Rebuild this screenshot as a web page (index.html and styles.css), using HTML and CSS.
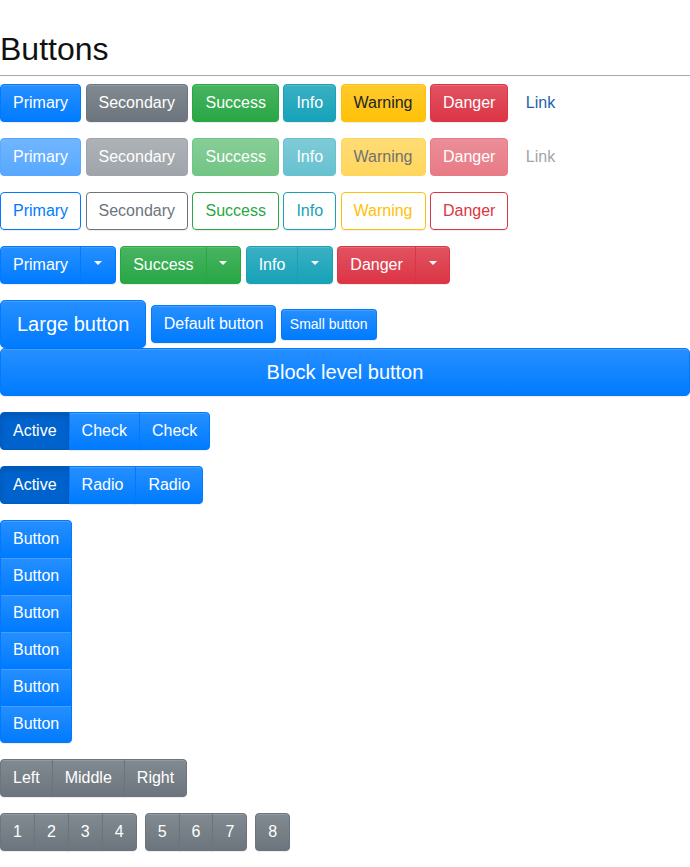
FILE: index.html
```html
<!DOCTYPE html>
<html lang="en">
<head>
<meta charset="utf-8">
<title>Buttons</title>
<link rel="stylesheet" href="styles.css">
</head>
<body>
<h1 class="page-header">Buttons</h1>

<div class="row">
  <button class="btn btn-primary">Primary</button>
  <button class="btn btn-secondary">Secondary</button>
  <button class="btn btn-success">Success</button>
  <button class="btn btn-info">Info</button>
  <button class="btn btn-warning">Warning</button>
  <button class="btn btn-danger">Danger</button>
  <button class="btn btn-link">Link</button>
</div>

<div class="row">
  <button class="btn btn-primary disabled">Primary</button>
  <button class="btn btn-secondary disabled">Secondary</button>
  <button class="btn btn-success disabled">Success</button>
  <button class="btn btn-info disabled">Info</button>
  <button class="btn btn-warning disabled">Warning</button>
  <button class="btn btn-danger disabled">Danger</button>
  <button class="btn btn-link disabled">Link</button>
</div>

<div class="row">
  <button class="btn btn-outline-primary">Primary</button>
  <button class="btn btn-outline-secondary">Secondary</button>
  <button class="btn btn-outline-success">Success</button>
  <button class="btn btn-outline-info">Info</button>
  <button class="btn btn-outline-warning">Warning</button>
  <button class="btn btn-outline-danger">Danger</button>
</div>

<div class="row">
  <div class="btn-group">
    <button class="btn btn-primary">Primary</button>
    <button class="btn btn-primary toggle"><span class="caret"></span></button>
  </div>
  <div class="btn-group">
    <button class="btn btn-success">Success</button>
    <button class="btn btn-success toggle"><span class="caret"></span></button>
  </div>
  <div class="btn-group">
    <button class="btn btn-info">Info</button>
    <button class="btn btn-info toggle"><span class="caret"></span></button>
  </div>
  <div class="btn-group">
    <button class="btn btn-danger">Danger</button>
    <button class="btn btn-danger toggle"><span class="caret"></span></button>
  </div>
</div>

<div class="row row-tight">
  <button class="btn btn-primary btn-lg">Large button</button>
  <button class="btn btn-primary">Default button</button>
  <button class="btn btn-primary btn-sm">Small button</button>
</div>
<button class="btn btn-primary btn-lg btn-block">Block level button</button>

<div class="row">
  <div class="btn-group">
    <button class="btn btn-primary active">Active</button>
    <button class="btn btn-primary">Check</button>
    <button class="btn btn-primary">Check</button>
  </div>
</div>

<div class="row">
  <div class="btn-group">
    <button class="btn btn-primary active">Active</button>
    <button class="btn btn-primary">Radio</button>
    <button class="btn btn-primary">Radio</button>
  </div>
</div>

<div class="row">
  <div class="btn-group-vertical">
    <button class="btn btn-primary">Button</button>
    <button class="btn btn-primary">Button</button>
    <button class="btn btn-primary">Button</button>
    <button class="btn btn-primary">Button</button>
    <button class="btn btn-primary">Button</button>
    <button class="btn btn-primary">Button</button>
  </div>
</div>

<div class="row">
  <div class="btn-group">
    <button class="btn btn-secondary">Left</button>
    <button class="btn btn-secondary">Middle</button>
    <button class="btn btn-secondary">Right</button>
  </div>
</div>

<div class="row toolbar">
  <div class="btn-group">
    <button class="btn btn-secondary">1</button>
    <button class="btn btn-secondary">2</button>
    <button class="btn btn-secondary">3</button>
    <button class="btn btn-secondary">4</button>
  </div>
  <div class="btn-group">
    <button class="btn btn-secondary">5</button>
    <button class="btn btn-secondary">6</button>
    <button class="btn btn-secondary">7</button>
  </div>
  <div class="btn-group">
    <button class="btn btn-secondary">8</button>
  </div>
</div>
</body>
</html>
```

FILE: styles.css
```css
* { box-sizing: border-box; }

body {
  margin: 0;
  font-family: "Liberation Sans", Arial, sans-serif;
  font-size: 16px;
  line-height: 1.5;
  color: #212529;
  background: #fff;
}

.page-header {
  margin: 30px 0 8px;
  padding-bottom: 7px;
  font-size: 32px;
  font-weight: 400;
  line-height: 38px;
  color: #111;
  border-bottom: 1px solid #a9a9a9;
}

.row {
  display: flex;
  align-items: center;
  gap: 4.45px;
  margin-bottom: 16px;
}
.row-tight { margin-bottom: 0; }
.toolbar { gap: 8px; }

.btn {
  display: inline-flex;
  align-items: center;
  justify-content: center;
  margin: 0;
  padding: 6px 12px;
  font-family: inherit;
  font-size: 16px;
  line-height: 24px;
  font-weight: 400;
  white-space: nowrap;
  border: 1px solid transparent;
  border-radius: 4px;
  background: transparent;
  color: #212529;
  cursor: pointer;
  box-shadow: inset 0 1px 0 rgba(255,255,255,.15), 0 1px 1px rgba(0,0,0,.075);
}

.btn-primary { color: #fff; background: #007bff linear-gradient(180deg, #268fff, #007bff) repeat-x; border-color: #007bff; }
.btn-secondary { color: #fff; background: #6c757d linear-gradient(180deg, #828a91, #6c757d) repeat-x; border-color: #6c757d; }
.btn-success { color: #fff; background: #28a745 linear-gradient(180deg, #48b461, #28a745) repeat-x; border-color: #28a745; }
.btn-info { color: #fff; background: #17a2b8 linear-gradient(180deg, #3ab0c3, #17a2b8) repeat-x; border-color: #17a2b8; }
.btn-warning { color: #212529; background: #ffc107 linear-gradient(180deg, #ffca2c, #ffc107) repeat-x; border-color: #ffc107; }
.btn-danger { color: #fff; background: #dc3545 linear-gradient(180deg, #e15361, #dc3545) repeat-x; border-color: #dc3545; }
.btn-link { color: #2561ab; box-shadow: none; }

.btn-primary.active {
  background: #0062cc;
  border-color: #005cbf;
  box-shadow: inset 0 3px 5px rgba(0,0,0,.125);
}

.btn.disabled { opacity: .65; box-shadow: none; }
.btn-link.disabled { color: #6c757d; }

.btn-outline-primary { color: #007bff; border-color: #007bff; }
.btn-outline-secondary { color: #6c757d; border-color: #6c757d; }
.btn-outline-success { color: #28a745; border-color: #28a745; }
.btn-outline-info { color: #17a2b8; border-color: #17a2b8; }
.btn-outline-warning { color: #ffc107; border-color: #ffc107; }
.btn-outline-danger { color: #dc3545; border-color: #dc3545; }

.btn-lg { padding: 8px 16px; font-size: 20px; line-height: 30px; border-radius: 4.8px; }
.btn-sm { padding: 4px 8px; font-size: 14px; line-height: 21px; border-radius: 3.2px; }
.btn-block { display: flex; width: 100%; margin-bottom: 16px; }

.toggle { width: 35.6px; padding-left: 0; padding-right: 0; }
.caret {
  display: block;
  width: 0;
  height: 0;
  margin-bottom: 5px;
  border-top: 4.8px solid #fff;
  border-left: 4.8px solid transparent;
  border-right: 4.8px solid transparent;
}

.btn-group { display: inline-flex; }
.btn-group > .btn + .btn { margin-left: -1px; }
.btn-group > .btn:not(:last-child) { border-top-right-radius: 0; border-bottom-right-radius: 0; }
.btn-group > .btn:not(:first-child) { border-top-left-radius: 0; border-bottom-left-radius: 0; }

.btn-group-vertical { display: inline-flex; flex-direction: column; align-items: stretch; }
.btn-group-vertical > .btn + .btn { margin-top: -1px; }
.btn-group-vertical > .btn:not(:last-child) { border-bottom-left-radius: 0; border-bottom-right-radius: 0; }
.btn-group-vertical > .btn:not(:first-child) { border-top-left-radius: 0; border-top-right-radius: 0; }
```
